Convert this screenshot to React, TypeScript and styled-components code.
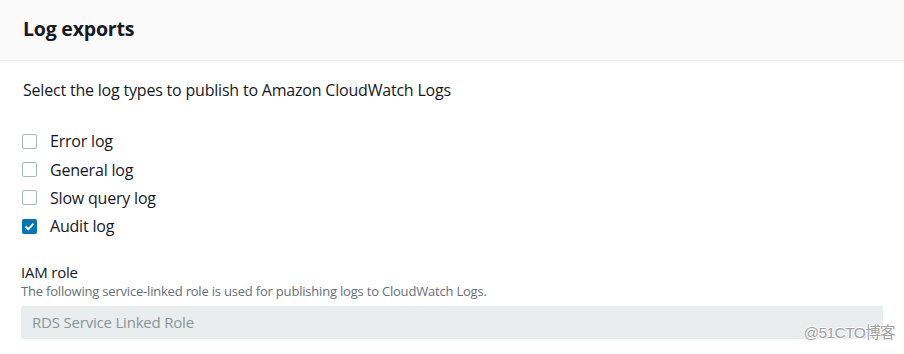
import React, { useState } from "react";
import styled, { createGlobalStyle } from "styled-components";

const GlobalStyle = createGlobalStyle`
    html, body {
        margin: 0;
        padding: 0;
        background: #ffffff;
    }
    body {
        font-family: "Open Sans", "Noto Sans", Arial, sans-serif;
        color: #16191f;
    }
`;

const Panel = styled.div`
    position: relative;
    width: 904px;
    height: 354px;
    overflow: hidden;
    background: #ffffff;
`;

const Header = styled.div`
    height: 61px;
    display: flex;
    align-items: center;
    padding: 0 23px 3px;
    background: #fafafa;
    border-bottom: 1px solid #eaeded;
    box-sizing: border-box;
`;

const Title = styled.h2`
    margin: 0;
    font-size: 19.5px;
    font-weight: 700;
    color: #16191f;
    letter-spacing: -0.2px;
`;

const Body = styled.div`
    padding: 18px 21px 0 22px;
    display: flex;
    flex-direction: column;
`;

const Lead = styled.p`
    margin: 0 0 0 1px;
    font-size: 16px;
    line-height: 22px;
    letter-spacing: -0.2px;
`;

const CheckList = styled.div`
    margin-top: 26px;
    display: flex;
    flex-direction: column;
`;

const Option = styled.label`
    height: 28.4px;
    display: flex;
    align-items: center;
    gap: 13px;
    font-size: 16px;
    letter-spacing: -0.2px;
    cursor: pointer;
`;

const Box = styled.span<{ checked: boolean }>`
    width: 15px;
    height: 15px;
    box-sizing: border-box;
    border-radius: 2px;
    border: ${({ checked }) => (checked ? "none" : "1px solid #aab7b8")};
    background: ${({ checked }) => (checked ? "#0073bb" : "#ffffff")};
    display: flex;
    align-items: center;
    justify-content: center;
    flex-shrink: 0;
`;

const Field = styled.div`
    margin-top: 21px;
    display: flex;
    flex-direction: column;
`;

const FieldLabel = styled.div`
    font-size: 15px;
    line-height: 20px;
    letter-spacing: -0.2px;
    margin-left: -1px;
`;

const FieldHint = styled.div`
    font-size: 13px;
    line-height: 18px;
    color: #687078;
    letter-spacing: -0.2px;
    margin-left: -1px;
    margin-bottom: 6px;
`;

const Input = styled.div`
    height: 33px;
    display: flex;
    align-items: center;
    padding: 0 11px;
    margin-left: -1px;
    background: #eaeded;
    border-radius: 2px;
    color: #879596;
    font-size: 15px;
    letter-spacing: -0.2px;
`;

const Watermark = styled.div`
    position: absolute;
    right: 9px;
    bottom: 12px;
    font-family: "Liberation Sans", "Noto Sans CJK SC", sans-serif;
    font-size: 15.5px;
    color: #a0a0a0;
    text-shadow: 1px 0 #fff, -1px 0 #fff, 0 1px #fff, 0 -1px #fff, 1px 1px 1px #ccc;
    letter-spacing: -0.6px;
`;

const Check = () => (
    <svg width="11" height="9" viewBox="0 0 11 9">
        <path d="M1.5 4.5 L4.3 7.2 L9.5 1.6" fill="none" stroke="#fff" strokeWidth="2" />
    </svg>
);

const logTypes = ["Error log", "General log", "Slow query log", "Audit log"];

export default function App() {
    const [selected, setSelected] = useState<string[]>(["Audit log"]);

    const toggle = (name: string) =>
        setSelected((s) => (s.includes(name) ? s.filter((n) => n !== name) : [...s, name]));

    return (
        <Panel>
            <GlobalStyle />
            <Header>
                <Title>Log exports</Title>
            </Header>
            <Body>
                <Lead>Select the log types to publish to Amazon CloudWatch Logs</Lead>
                <CheckList>
                    {logTypes.map((name) => {
                        const on = selected.includes(name);
                        return (
                            <Option key={name} onClick={() => toggle(name)}>
                                <Box checked={on}>{on && <Check />}</Box>
                                {name}
                            </Option>
                        );
                    })}
                </CheckList>
                <Field>
                    <FieldLabel>IAM role</FieldLabel>
                    <FieldHint>
                        The following service-linked role is used for publishing logs to CloudWatch Logs.
                    </FieldHint>
                    <Input>RDS Service Linked Role</Input>
                </Field>
            </Body>
            <Watermark>@51CTO博客</Watermark>
        </Panel>
    );
}
